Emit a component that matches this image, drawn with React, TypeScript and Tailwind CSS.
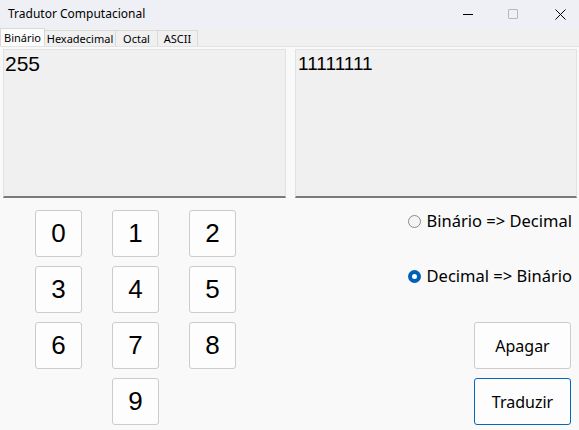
export default function App() {
  const keys = ["0", "1", "2", "3", "4", "5", "6", "7", "8"];
  return (
    <div
      className="w-[579px] h-[430px] flex flex-col bg-[#f9f9f9] overflow-hidden"
      style={{ fontFamily: "'Noto Sans', 'Open Sans', sans-serif" }}
    >
      {/* title bar */}
      <div className="h-[28px] flex items-center bg-[#eff0f6] shrink-0">
        <span className="pl-[8px] text-[12px] text-black">Tradutor Computacional</span>
        <div className="ml-auto flex items-center h-full gap-[35px] pr-[13px]">
          <div className="w-[10px] h-px bg-black" />
          <div className="w-[10px] h-[10px] border border-[#b8b8bc] rounded-[1px] mr-[2px]" />
          <svg width="11" height="11" viewBox="0 0 11 11">
            <path d="M0.5 0.5 L10.5 10.5 M10.5 0.5 L0.5 10.5" stroke="#000" strokeWidth="1" />
          </svg>
        </div>
      </div>

      {/* tabs */}
      <div className="h-[18px] flex items-end bg-[#f0f0f0] shrink-0 text-[11px] leading-none">
        <div className="w-[45px] h-[18px] bg-[#fcfcfc] border border-b-0 border-[#d9d9d9] flex items-center justify-center">
          Binário
        </div>
        <div className="w-[71px] h-[16px] border-t border-r border-[#d9d9d9] flex items-center justify-center">
          Hexadecimal
        </div>
        <div className="w-[42px] h-[16px] border-t border-r border-[#d9d9d9] flex items-center justify-center">
          Octal
        </div>
        <div className="w-[40px] h-[16px] border-t border-r border-[#d9d9d9] flex items-center justify-center">
          ASCII
        </div>
      </div>

      {/* tab page */}
      <div className="flex-1 flex flex-col bg-[#f9f9f9] border-t border-[#e3e3e3]">
        <div className="flex gap-[9px] pt-[2px] pl-[3px] pr-[2px]">
          <div
            className="w-[283px] h-[149px] bg-[#f0f0f0] border border-[#e2e2e2] border-b-2 border-b-[#7a7a7a] px-[1px] pt-[2px] text-[21px] leading-[24px] text-black"
            style={{ fontFamily: "'Liberation Sans', Arial, sans-serif" }}
          >
            255
          </div>
          <div
            className="w-[282px] h-[149px] bg-[#f0f0f0] border border-[#e2e2e2] border-b-2 border-b-[#7a7a7a] px-[2px] pt-[2px] text-[19px] leading-[24px] text-black"
            style={{ fontFamily: "'Liberation Sans', Arial, sans-serif" }}
          >
            11111111
          </div>
        </div>

        <div className="flex items-start pt-[12px]">
          {/* keypad */}
          <div
            className="ml-[35px] grid grid-cols-[47px_47px_47px] auto-rows-[47px] content-start gap-x-[30px] gap-y-[9px]"
            style={{ fontFamily: "'Liberation Sans', Arial, sans-serif" }}
          >
            {keys.map((k) => (
              <div
                key={k}
                className="w-[47px] h-[47px] bg-[#fdfdfd] border border-[#cccccc] rounded-[3px] flex items-center justify-center text-[26px] text-black"
              >
                {k}
              </div>
            ))}
            <div />
            <div className="w-[47px] h-[47px] bg-[#fdfdfd] border border-[#cccccc] rounded-[3px] flex items-center justify-center text-[26px] text-black">
              9
            </div>
          </div>

          {/* options */}
          <div className="ml-auto mr-[7px] flex flex-col items-end">
            <div className="flex flex-col gap-[35px] pt-[1px] text-[16.5px] text-black">
              <label className="flex items-center gap-[6px] h-[20px]">
                <span className="w-[13px] h-[13px] rounded-full border border-[#8a8a8a] bg-[#f4f4f4]" />
                Binário =&gt; Decimal
              </label>
              <label className="flex items-center gap-[6px] h-[20px]">
                <span className="w-[13px] h-[13px] rounded-full bg-[#005fb8] flex items-center justify-center">
                  <span className="w-[5px] h-[5px] rounded-full bg-white" />
                </span>
                Decimal =&gt; Binário
              </label>
            </div>
            <div className="mt-[36px] flex flex-col gap-[9px] mr-[1px]">
              <div className="w-[97px] h-[47px] bg-[#fdfdfd] border border-[#cccccc] rounded-[3px] flex items-center justify-center text-[16px] text-black">
                Apagar
              </div>
              <div className="w-[97px] h-[47px] bg-[#fdfdfd] border border-[#0067c0] rounded-[3px] flex items-center justify-center text-[16px] text-black">
                Traduzir
              </div>
            </div>
          </div>
        </div>
      </div>
    </div>
  );
}
